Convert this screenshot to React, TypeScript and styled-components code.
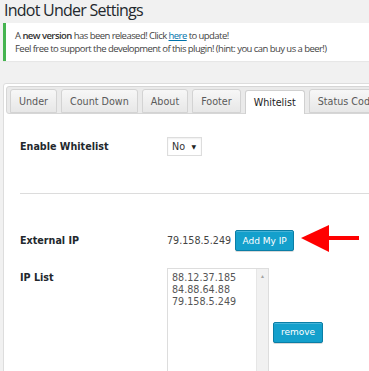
import styled, { createGlobalStyle } from "styled-components";


const GlobalStyle = createGlobalStyle`
    html, body {
        margin: 0;
        padding: 0;
        overflow: hidden;
        background: #f1f1f1;
    }
    * {
        box-sizing: border-box;
    }
`


function App() {

    const tabs = ["Under", "Count Down", "About", "Footer", "Whitelist", "Status Codes"];
    const ips = ["88.12.37.185", "84.88.64.88", "79.158.5.249"];

    return (
        <Page>
            <GlobalStyle/>
            <Title>Indot Under Settings</Title>
            <Notice>
                <NoticeLine>A <b>new version</b> has been released! Click <NoticeLink>here</NoticeLink> to update!</NoticeLine>
                <NoticeLine>Feel free to support the development of this plugin! (hint: you can buy us a beer!)</NoticeLine>
            </Notice>
            <Panel>
                <TabBar>
                    {tabs.map((t) => (
                        <Tab key={t} $active={t === "Whitelist"}>{t}</Tab>
                    ))}
                </TabBar>
                <Content>
                    <FormRow $top={23}>
                        <Label>Enable Whitelist</Label>
                        <Select>
                            <span>No</span>
                            <Caret>▼</Caret>
                        </Select>
                    </FormRow>
                    <Divider/>
                    <FormRow $top={34}>
                        <Label>External IP</Label>
                        <ValueLine>
                            <IpText>79.158.5.249</IpText>
                            <BlueButton $w={59} $h={21}>Add My IP</BlueButton>
                            <Arrow width="60" height="28" viewBox="0 0 60 28">
                                <polygon points="0,13 28,0 28,27" fill="#f00"/>
                                <rect x="27" y="11" width="31" height="4" fill="#f00"/>
                            </Arrow>
                        </ValueLine>
                    </FormRow>
                    <FormRow $top={15} $align="start">
                        <Label $pad={4}>IP List</Label>
                        <ListLine>
                            <ListBox>
                                {ips.map((ip) => (
                                    <ListItem key={ip}>{ip}</ListItem>
                                ))}
                                <ScrollTrack>
                                    <ScrollUp>▲</ScrollUp>
                                </ScrollTrack>
                            </ListBox>
                            <BlueButton $w={50} $h={21}>remove</BlueButton>
                        </ListLine>
                    </FormRow>
                </Content>
            </Panel>
        </Page>
    )
}


const Page = styled.div`
    width: 369px;
    height: 371px;
    overflow: hidden;
    padding-left: 3px;
`

const Title = styled.h1`
    margin: 0;
    padding: 1px 0 0 1px;
    height: 23px;
    font-family: "Open Sans", sans-serif;
    font-weight: 400;
    font-size: 16px;
    letter-spacing: -0.75px;
    line-height: 18px;
    color: #23282d;
`

const Notice = styled.div`
    width: 400px;
    height: 38px;
    background: #fff;
    border-left: 3px solid #46b450;
    padding: 6px 0 0 9px;
    box-shadow: 0 1px 1px rgba(0, 0, 0, 0.04);
`

const NoticeLine = styled.div`
    font-family: "Open Sans", sans-serif;
    font-size: 9.5px;
    letter-spacing: -0.55px;
    line-height: 13px;
    color: #444;
    white-space: nowrap;
    b {
        font-weight: 600;
        color: #333;
    }
`

const NoticeLink = styled.a`
    color: #0073aa;
    text-decoration: underline;
`

const Panel = styled.div`
    margin-top: 22px;
    width: 400px;
    height: 320px;
    border: 1px solid #dddddd;
    border-radius: 3px;
    background: #fff;
    padding: 2px;
`

const TabBar = styled.div`
    display: flex;
    gap: 4px;
    height: 28px;
    padding: 3px 0 0 3px;
    background: #eaeaea;
    border: 1px solid #d6d6d6;
    border-radius: 3px;
    align-items: flex-end;
`

const Tab = styled.div<{ $active?: boolean }>`
    height: 24px;
    margin-bottom: ${(p) => (p.$active ? "-1px" : "0")};
    padding: 0 8px;
    border: 1px solid ${(p) => (p.$active ? "#d0d0d0" : "#d3d3d3")};
    border-bottom: ${(p) => (p.$active ? "none" : "1px solid #d3d3d3")};
    border-radius: 3px 3px 0 0;
    background: ${(p) => (p.$active ? "#fff" : "linear-gradient(#f7f7f7, #e7e7e7)")};
    font-family: "DejaVu Sans", Verdana, sans-serif;
    font-size: 9.6px;
    line-height: 23px;
    color: ${(p) => (p.$active ? "#212121" : "#5a5a5a")};
    white-space: nowrap;
`

const Content = styled.div`
    padding-left: 14px;
`

const FormRow = styled.div<{ $top: number; $align?: string }>`
    display: grid;
    grid-template-columns: 147px 1fr;
    align-items: ${(p) => p.$align ?? "center"};
    margin-top: ${(p) => p.$top}px;
`

const Label = styled.div<{ $pad?: number }>`
    font-family: "DejaVu Sans", Verdana, sans-serif;
    font-weight: 700;
    font-size: 9.6px;
    color: #23282d;
    padding-top: ${(p) => p.$pad ?? 0}px;
`

const Select = styled.div`
    width: 35px;
    height: 19px;
    border: 1px solid #dddddd;
    background: #fff;
    display: flex;
    align-items: center;
    justify-content: space-between;
    padding: 0 5px 0 4px;
    font-family: "DejaVu Sans", Verdana, sans-serif;
    font-size: 9.6px;
    color: #333;
    box-shadow: inset 0 1px 2px rgba(0, 0, 0, 0.07);
`

const Caret = styled.span`
    font-size: 6px;
    color: #222;
`

const Divider = styled.div`
    margin-top: 37px;
    height: 1px;
    background: #dcdcdc;
`

const ValueLine = styled.div`
    display: flex;
    align-items: center;
`

const IpText = styled.span`
    font-family: "DejaVu Sans", Verdana, sans-serif;
    font-size: 9.6px;
    color: #444;
    margin-right: 4px;
`

const BlueButton = styled.div<{ $w: number; $h: number }>`
    width: ${(p) => p.$w}px;
    height: ${(p) => p.$h}px;
    background: #14a0cc;
    border: 1px solid #0a7ea6;
    border-radius: 2px;
    box-shadow: inset 0 1px 0 rgba(120, 200, 230, 0.5), 0 1px 0 rgba(0, 0, 0, 0.15);
    color: #fff;
    font-family: "DejaVu Sans", Verdana, sans-serif;
    font-size: 9px;
    display: flex;
    align-items: center;
    justify-content: center;
    flex-shrink: 0;
`

const Arrow = styled.svg`
    margin-left: 7px;
    margin-top: -3px;
    flex-shrink: 0;
`

const ListLine = styled.div`
    display: flex;
    align-items: center;
    gap: 4px;
`

const ListBox = styled.div`
    position: relative;
    width: 102px;
    height: 128px;
    border: 1px solid #dddddd;
    background: #fff;
    padding: 3px 0 0 4px;
`

const ListItem = styled.div`
    font-family: "DejaVu Sans", Verdana, sans-serif;
    font-size: 9.6px;
    line-height: 12px;
    color: #555;
`

const ScrollTrack = styled.div`
    position: absolute;
    top: 0;
    right: 0;
    width: 12px;
    height: 100%;
    background: #f1f1f1;
    border-left: 1px solid #e6e6e6;
    display: flex;
    justify-content: center;
`

const ScrollUp = styled.span`
    font-size: 5px;
    color: #a3a3a3;
    margin-top: 5px;
`


export default App;
